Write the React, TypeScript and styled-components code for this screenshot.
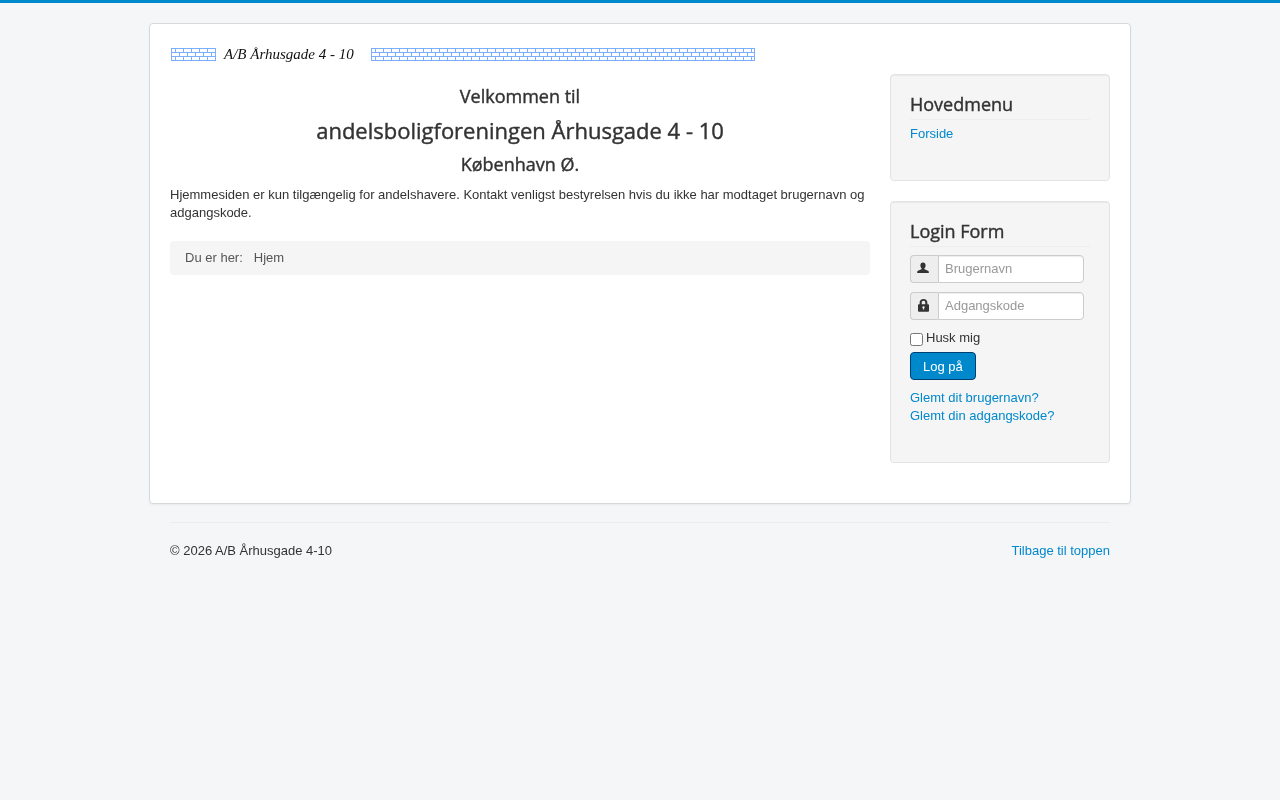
import styled, { createGlobalStyle } from "styled-components";

const GlobalStyle = createGlobalStyle`
  body {
    margin: 0;
    min-height: 800px;
    background: #f4f6f8;
    border-top: 3px solid #0088cc;
    font-family: "Liberation Sans", Arial, sans-serif;
    font-size: 13px;
    line-height: 18px;
    color: #333;
  }
  * { box-sizing: border-box; }
  a { color: #0088cc; text-decoration: none; }
`;

const Page = styled.div`
  width: 982px;
  margin: 20px auto 0;
  will-change: transform;
`;

const Body = styled.div`
  height: 481px;
  padding: 20px;
  background: #fff;
  border: 1px solid #d6d8da;
  border-radius: 4px;
  box-shadow: 0 1px 2px rgba(0, 0, 0, 0.05);
`;

const Logo = styled.div`
  display: flex;
  align-items: center;
  height: 20px;
  margin: 0 0 10px 1px;
`;

const LogoText = styled.span`
  margin: 0 17px 0 8px;
  font-family: "Liberation Serif", "Times New Roman", serif;
  font-style: italic;
  font-size: 15px;
  color: #111;
  white-space: nowrap;
`;

const Columns = styled.div`
  display: flex;
  gap: 20px;
`;

const Main = styled.main`
  width: 700px;
`;

const Heading = styled.h1<{ $size: number; $height: number }>`
  margin: 0;
  text-align: center;
  font-family: "Open Sans", sans-serif;
  font-weight: 500;
  font-size: ${(props) => props.$size}px;
  line-height: ${(props) => props.$height}px;
  color: #333;
  -webkit-text-stroke: 0.4px #333;
`;

const Intro = styled.p`
  margin: 0 0 19px;
`;

const Breadcrumb = styled.ul`
  display: flex;
  gap: 11px;
  height: 34px;
  margin: 0;
  padding: 8px 15px;
  list-style: none;
  background: #f5f5f5;
  border-radius: 4px;
  color: #555;
`;

const Sidebar = styled.aside`
  display: flex;
  flex-direction: column;
  gap: 20px;
  width: 220px;
`;

const Well = styled.section<{ $height: number }>`
  height: ${(props) => props.$height}px;
  padding: 19px;
  background: #f5f5f5;
  border: 1px solid #e3e3e3;
  border-radius: 4px;
  box-shadow: inset 0 1px 1px rgba(0, 0, 0, 0.05);
`;

const WellTitle = styled.h3`
  margin: 0 0 4px;
  height: 26px;
  border-bottom: 1px solid #eee;
  font-family: "Open Sans", sans-serif;
  font-weight: 500;
  font-size: 18px;
  line-height: 20px;
  color: #333;
  -webkit-text-stroke: 0.4px #333;
`;

const MenuLink = styled.a`
  display: block;
  margin-top: 5px;
`;

const LoginForm = styled.form`
  margin-top: 8px;
`;

const InputGroup = styled.div`
  display: flex;
  width: 174px;
  height: 28px;
  margin-bottom: 9px;
`;

const Addon = styled.span`
  display: flex;
  align-items: center;
  justify-content: center;
  width: 28px;
  padding: 0 3px 2px 0;
  background: #eee;
  border: 1px solid #ccc;
  border-right: 0;
  border-radius: 4px 0 0 4px;
  color: #333;
`;

const Input = styled.input`
  flex: 1;
  min-width: 0;
  padding: 3px 6px 5px;
  background: #fff;
  border: 1px solid #ccc;
  border-radius: 0 4px 4px 0;
  box-shadow: inset 0 1px 1px rgba(0, 0, 0, 0.075);
  font-family: inherit;
  font-size: 13px;
  color: #555;
  &::placeholder { color: #999; opacity: 1; }
`;

const Remember = styled.label`
  display: flex;
  align-items: center;
  gap: 3px;
  height: 18px;
  margin: 1px 0 5px;
  input { width: 13px; height: 13px; margin: 3px 0 0; }
`;

const Button = styled.button`
  display: block;
  height: 28px;
  padding: 0 12px;
  background: #0088cc;
  border: 1px solid #003f73;
  border-radius: 4px;
  font-family: inherit;
  font-size: 13px;
  color: #fff;
`;

const LinkList = styled.ul`
  margin: 9px 0 0;
  padding: 0;
  list-style: none;
`;

const Footer = styled.footer`
  display: flex;
  justify-content: space-between;
  margin: 18px 21px 0;
  padding-top: 19px;
  border-top: 1px solid #ececee;
`;

const Bricks = ({ width }: { width: number }) => {
  const rows = [0, 1, 2];
  let verticals = "";
  rows.forEach((row) => {
    const start = row === 1 ? 8.5 : 4.5;
    for (let x = start; x < width - 1; x += 8) {
      verticals += `M${x} ${row * 4}v4`;
    }
  });
  return (
    <svg width={width} height={13} viewBox={`0 0 ${width} 13`}>
      <g fill="none" stroke="#7aaeff" strokeWidth="1" shapeRendering="crispEdges">
        <rect x="0.5" y="0.5" width={width - 1} height="12" />
        <path d={`M0 4.5H${width}M0 8.5H${width}`} />
        <path d={verticals} />
      </g>
    </svg>
  );
};

const UserIcon = () => (
  <svg width="12" height="12" viewBox="0 0 12 12">
    <path fill="#333" d="M6 0.5c1.7 0 2.6 1.2 2.6 3 0 1.3-.6 2.5-1.3 3 0 .6.2.9.8 1.1l2.9 1.1c.5.2.8.6.8 1.1v1.2H.2v-1.2c0-.5.3-.9.8-1.1l2.9-1.1c.6-.2.8-.5.8-1.1-.7-.5-1.3-1.7-1.3-3 0-1.8.9-3 2.6-3z" />
  </svg>
);

const LockIcon = () => (
  <svg width="11" height="13" viewBox="1.3 0.3 9.4 12.4" preserveAspectRatio="none">
    <path fill="#333" fillRule="evenodd" d="M6 .3c2 0 3.300 1.400 3.300 3.400v1.600h.6c.5 0 .8.3.8.8v5.600c0 .5-.3.8-.8.8H2.100c-.5 0-.8-.3-.8-.8V6.100c0-.5.3-.8.8-.8h.6V3.700C2.700 1.700 4 .3 6 .3zm0 1.700c-1 0-1.500.7-1.500 1.700v1.600h3V3.700C7.500 2.700 7 2 6 2zM6 7.200a1 1 0 0 0-.5 1.900v1.200h1V9.100A1 1 0 0 0 6 7.200z" />
  </svg>
);

export default function App() {
  return (
    <Page>
      <GlobalStyle />
      <Body>
        <Logo>
          <Bricks width={45} />
          <LogoText>A/B Århusgade 4 - 10</LogoText>
          <Bricks width={384} />
        </Logo>
        <Columns>
          <Main>
            <Heading $size={18} $height={44}>Velkommen til</Heading>
            <Heading $size={22} $height={25}>andelsboligforeningen Århusgade 4 - 10</Heading>
            <Heading $size={18} $height={43}>København Ø.</Heading>
            <Intro>
              Hjemmesiden er kun tilgængelig for andelshavere. Kontakt venligst bestyrelsen hvis du ikke har modtaget brugernavn og adgangskode.
            </Intro>
            <Breadcrumb>
              <li>Du er her:</li>
              <li>Hjem</li>
            </Breadcrumb>
          </Main>
          <Sidebar>
            <Well $height={107}>
              <WellTitle>Hovedmenu</WellTitle>
              <MenuLink href="#">Forside</MenuLink>
            </Well>
            <Well $height={262}>
              <WellTitle>Login Form</WellTitle>
              <LoginForm>
                <InputGroup>
                  <Addon><UserIcon /></Addon>
                  <Input placeholder="Brugernavn" />
                </InputGroup>
                <InputGroup>
                  <Addon><LockIcon /></Addon>
                  <Input placeholder="Adgangskode" />
                </InputGroup>
                <Remember>
                  <input type="checkbox" />
                  <span>Husk mig</span>
                </Remember>
                <Button type="button">Log på</Button>
                <LinkList>
                  <li><a href="#">Glemt dit brugernavn?</a></li>
                  <li><a href="#">Glemt din adgangskode?</a></li>
                </LinkList>
              </LoginForm>
            </Well>
          </Sidebar>
        </Columns>
      </Body>
      <Footer>
        <span>© 2026 A/B Århusgade 4-10</span>
        <a href="#">Tilbage til toppen</a>
      </Footer>
    </Page>
  );
}
